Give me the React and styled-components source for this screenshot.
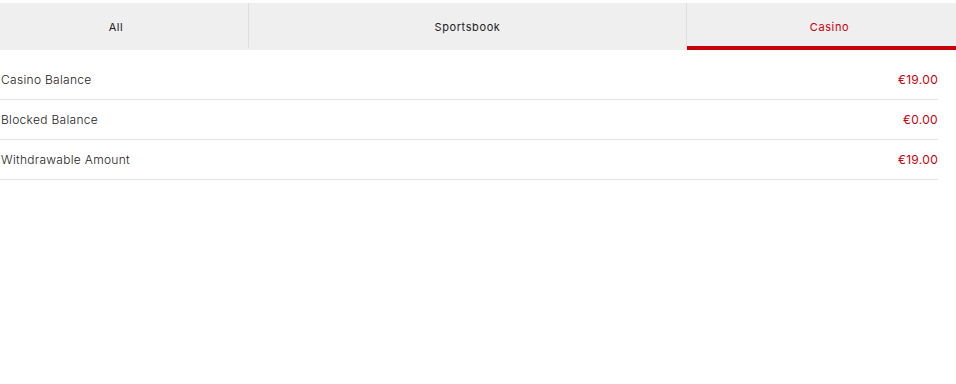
import React from 'react';
import styled, { createGlobalStyle } from 'styled-components';

const GlobalStyle = createGlobalStyle`
    body {
        margin: 0;
        background: #fff;
        font-family: Inter, "Open Sans", sans-serif;
    }
`

const tabs = [
    { key: 'all', label: 'All', basis: 265 },
    { key: 'sportsbook', label: 'Sportsbook', basis: 438 },
    { key: 'casino', label: 'Casino', basis: 285 },
]

const rows = [
    { label: 'Casino Balance', value: '€19.00' },
    { label: 'Blocked Balance', value: '€0.00' },
    { label: 'Withdrawable Amount', value: '€19.00' },
]

const App = () => {
    const [active, setActive] = React.useState('casino')
    return (
        <Container>
            <GlobalStyle />
            <TabBar>
                {tabs.map(t => (
                    <Tab key={t.key} $basis={t.basis} $active={active === t.key} onClick={() => setActive(t.key)}>
                        {t.label}
                    </Tab>
                ))}
            </TabBar>
            <List>
                {rows.map(r => (
                    <Row key={r.label}>
                        <Label>{r.label}</Label>
                        <Value>{r.value}</Value>
                    </Row>
                ))}
            </List>
        </Container>
    );
};

export default App;

const Container = styled.div`
    width: 956px;
    padding-top: 3px;
    overflow: hidden;
`

const TabBar = styled.div`
    display: flex;
    height: 47px;
    margin: 0 -16px;
    background: #efefef;
`

const Tab = styled.div`
    flex: 0 0 ${p => p.$basis}px;
    display: flex;
    align-items: center;
    justify-content: center;
    box-sizing: border-box;
    font-size: 11px;
    font-weight: 400;
    letter-spacing: 0.6px;
    color: ${p => p.$active ? '#c8000a' : '#222'};
    border-right: 1px solid #dedede;
    border-bottom: 4px solid ${p => p.$active ? '#c8000a' : 'transparent'};
    padding-top: 4px;
    cursor: pointer;
    &:last-child {
        border-right: none;
    }
`

const List = styled.div`
    padding-right: 18px;
`

const Row = styled.div`
    display: flex;
    align-items: center;
    justify-content: space-between;
    box-sizing: border-box;
    height: 40px;
    border-bottom: 1px solid #e2e2e2;
    padding-left: 1px;
    font-size: 12px;
    font-weight: 300;
    letter-spacing: 0.3px;
    &:first-child {
        height: 50px;
        padding-top: 10px;
    }
`

const Label = styled.span`
    color: #222;
`

const Value = styled.span`
    color: #c8000a;
    font-weight: 400;
`
